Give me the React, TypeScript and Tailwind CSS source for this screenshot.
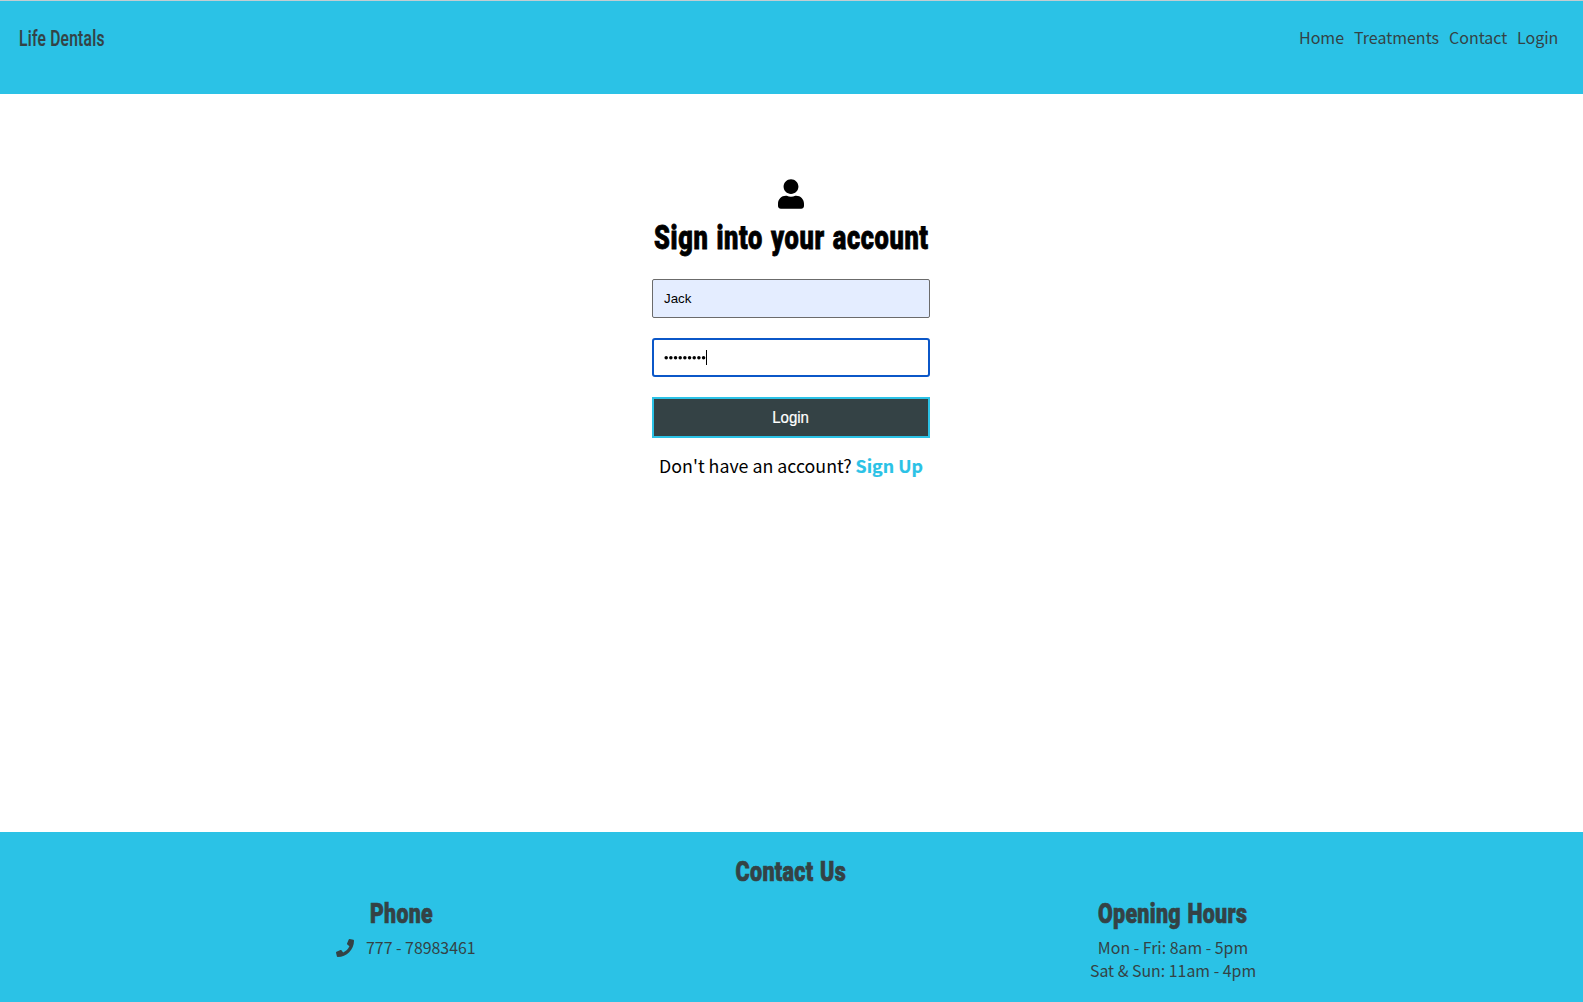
import { FaPhone, FaUser } from "react-icons/fa";

const links = [
  { label: "Home", width: "w-[45px]" },
  { label: "Treatments", width: "w-[85px]" },
  { label: "Contact", width: "w-[58px]" },
  { label: "Login", width: "w-[41px]" },
];

export default function App() {
  return (
    <div className="flex h-[1002px] flex-col overflow-hidden bg-white font-['Noto_Sans_CJK_SC',sans-serif] text-black">
      <header className="flex h-[94px] items-start justify-between border-t border-[#c3cdd2] bg-[#2bc2e6] pl-[19px] pr-[25px] text-[#344245]">
        <div className="mt-[20px] w-[85px] whitespace-nowrap font-['Roboto'] text-[22.5px] leading-[34px]">
          <span className="inline-block origin-left scale-x-[0.69] font-medium tracking-[0.4px] [-webkit-text-stroke:0.2px_currentColor]">Life Dentals</span>
        </div>
        <nav className="mt-[24px] flex gap-[10px] text-[16px] leading-6">
          {links.map((l) => (
            <a key={l.label} className={`${l.width} whitespace-nowrap`}>{l.label}</a>
          ))}
        </nav>
      </header>

      <main className="flex flex-1 flex-col items-center pr-px pt-[85px]">
        <FaUser className="h-[30px] w-[26px]" />
        <div className="mt-[7px] flex h-[44px] w-[278px] justify-center whitespace-nowrap font-['Roboto'] text-[33px] leading-[44px]">
          <h1 className="scale-x-[0.77] font-black tracking-[0.8px] [word-spacing:1.5px] [-webkit-text-stroke:0.8px_currentColor]">Sign into your account</h1>
        </div>
        <form className="mt-[19px] flex w-[278px] flex-col">
          <div className="flex h-[39px] items-center rounded-[2px] border border-[#6b6b6b] bg-[#e4edff] pl-[11px] font-['Liberation_Sans'] text-[13.33px]">Jack</div>
          <div className="mt-5 flex h-[39px] items-center rounded-[3px] border-2 border-[#0b57c8] pl-[10px]">
            <svg className="h-4 w-[42px]" viewBox="0 0 42 16">
              {Array.from({ length: 9 }, (_, i) => (
                <circle key={i} cx={2.2 + i * 4.67} cy="7.8" r="1.75" />
              ))}
            </svg>
            <span className="h-[15px] w-px bg-black" />
          </div>
          <button type="button" className="mt-5 h-[41px] border-2 border-[#2bc2e6] bg-[#344245] font-['Liberation_Sans'] text-base text-white"><span className="inline-block scale-x-[0.94] [-webkit-text-stroke:0.2px_currentColor]">Login</span></button>
        </form>
        <p className="mt-[13px] whitespace-nowrap text-[17.8px] leading-7">
          Don't have an account? <a className="font-bold text-[#2bc2e6] [-webkit-text-stroke:0.2px_currentColor]">Sign Up</a>
        </p>
      </main>

      <footer className="h-[170px] bg-[#2bc2e6] pt-[20px] text-center text-[#344245]">
        <div className="flex h-10 justify-center pr-px font-['Roboto'] text-[28px] leading-10">
          <h2 className="scale-x-[0.77] font-black tracking-[0.4px] [word-spacing:1px] [-webkit-text-stroke:0.7px_currentColor]">Contact Us</h2>
        </div>
        <div className="flex justify-between pl-[336px] pr-[328px]">
          <section className="w-[140px]">
            <div className="mt-[2px] flex h-10 w-[130px] justify-center whitespace-nowrap font-['Roboto'] text-[28px] leading-10">
              <h3 className="scale-x-[0.76] font-black tracking-[0.4px] [-webkit-text-stroke:0.7px_currentColor]">Phone</h3>
            </div>
            <p className="mt-[2px] flex items-center whitespace-nowrap text-[15.9px] leading-[23px]">
              <FaPhone className="mr-3 size-[18px] shrink-0" />777 - 78983461
            </p>
          </section>
          <section className="flex w-[164px] flex-col items-center">
            <div className="mt-[2px] flex h-10 w-[148px] justify-center whitespace-nowrap font-['Roboto'] text-[28px] leading-10">
              <h3 className="scale-x-[0.765] font-black tracking-[0.4px] [word-spacing:1px] [-webkit-text-stroke:0.7px_currentColor]">Opening Hours</h3>
            </div>
            <p className="mt-[2px] whitespace-nowrap text-[15.9px] leading-[23px]">Mon - Fri: 8am - 5pm<br />Sat &amp; Sun: 11am - 4pm</p>
          </section>
        </div>
      </footer>
    </div>
  );
}
